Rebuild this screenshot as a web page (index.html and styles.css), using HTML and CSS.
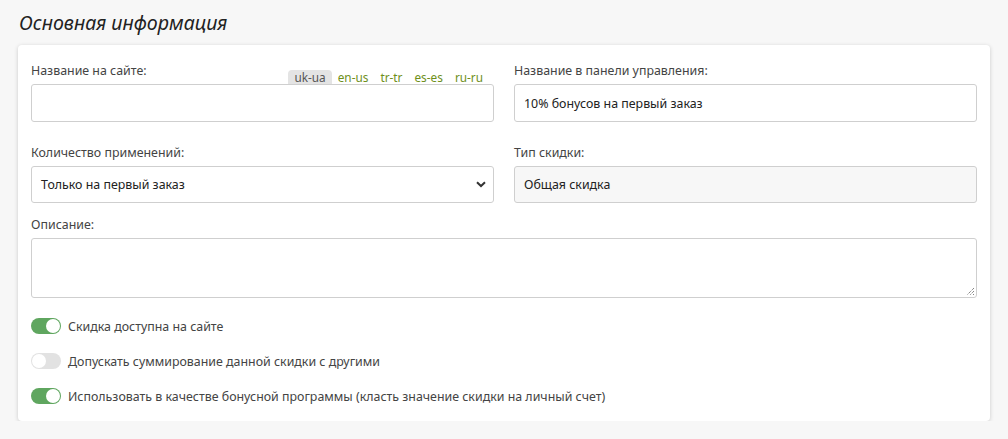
FILE: index.html
```html
<!DOCTYPE html>
<html lang="ru">
<head>
<meta charset="utf-8">
<link rel="stylesheet" href="styles.css">
</head>
<body>
<h2 class="title">Основная информация</h2>
<div class="card">
  <div class="row row-first">
    <div class="field">
      <div class="label-line">
        <label class="label">Название на сайте:</label>
        <div class="langs">
          <span class="lang active">uk-ua</span>
          <span class="lang">en-us</span>
          <span class="lang">tr-tr</span>
          <span class="lang">es-es</span>
          <span class="lang">ru-ru</span>
        </div>
      </div>
      <div class="input"></div>
    </div>
    <div class="field">
      <div class="label-line"><label class="label">Название в панели управления:</label></div>
      <div class="input">10% бонусов на первый заказ</div>
    </div>
  </div>
  <div class="row row-second">
    <div class="field">
      <div class="label-line"><label class="label">Количество применений:</label></div>
      <div class="input select">Только на первый заказ
        <svg class="chev" width="10" height="7" viewBox="0 0 10 7"><path d="M1 1.2 L5 5 L9 1.2" fill="none" stroke="#333" stroke-width="2"/></svg>
      </div>
    </div>
    <div class="field">
      <div class="label-line"><label class="label">Тип скидки:</label></div>
      <div class="input readonly">Общая скидка</div>
    </div>
  </div>
  <div class="field full">
    <div class="label-line"><label class="label">Описание:</label></div>
    <div class="textarea">
      <svg class="grip" width="9" height="9" viewBox="0 0 9 9"><path d="M8 1 L1 8 M8 4 L4 8 M8 7 L7 8" stroke="#555" stroke-width="1" stroke-dasharray="1 1"/></svg>
    </div>
  </div>
  <div class="toggles">
    <div class="toggle-row"><span class="switch on"><span class="knob"></span></span><span class="tlabel">Скидка доступна на сайте</span></div>
    <div class="toggle-row"><span class="switch"><span class="knob"></span></span><span class="tlabel">Допускать суммирование данной скидки с другими</span></div>
    <div class="toggle-row"><span class="switch on"><span class="knob"></span></span><span class="tlabel">Использовать в качестве бонусной программы (класть значение скидки на личный счет)</span></div>
  </div>
</div>
</body>
</html>
```

FILE: styles.css
```css
* { box-sizing: border-box; }
html, body { margin: 0; padding: 0; }
body {
  background: #f7f7f7;
  font-family: "Noto Sans", "Open Sans", sans-serif;
  font-size: 12.4px;
  color: #333;
  padding: 10px 18px 0 18px;
  width: 1008px;
}
.title {
  margin: 0 0 9px 1px;
  font-size: 19.6px;
  font-style: italic;
  font-weight: 400;
  line-height: 26px;
  color: #222;
}
.card {
  background: #fff;
  width: 972px;
  border-radius: 4px;
  box-shadow: 0 1px 4px rgba(0,0,0,0.18);
  padding: 17px 13px 16px 13px;
}
.row {
  display: grid;
  grid-template-columns: 1fr 1fr;
  column-gap: 20px;
}
.row-first { margin-bottom: 22px; }
.row-second { margin-bottom: 13px; }
.label-line {
  display: flex;
  justify-content: space-between;
  align-items: flex-end;
  height: 22px;
}
.label {
  color: #444;
  line-height: 18px;
  align-self: flex-start;
}
.langs {
  display: flex;
  margin-right: 5px;
  font-size: 11.8px;
  line-height: 14px;
}
.lang {
  color: #6e8f1a;
  padding: 0 6px;
  border-radius: 4px 4px 0 0;
}
.lang.active {
  background: #e4e4e4;
  color: #555;
}
.input {
  height: 38px;
  border: 1px solid #cfcfcf;
  border-radius: 3px;
  padding: 0 9px;
  display: flex;
  align-items: center;
  color: #222;
  background: #fff;
}
.row-second .input { height: 37px; }
.select {
  justify-content: space-between;
  padding-right: 7px;
}
.readonly { background: #f7f7f7; }
.textarea {
  height: 60px;
  border: 1px solid #cfcfcf;
  border-radius: 3px;
  display: flex;
  align-items: flex-end;
  justify-content: flex-end;
  padding: 0 1px 1px 0;
}
.toggles {
  display: flex;
  flex-direction: column;
  gap: 17px;
  margin-top: 19px;
}
.toggle-row {
  display: flex;
  align-items: center;
  height: 18px;
  gap: 7px;
}
.switch {
  width: 30px;
  height: 16px;
  border-radius: 8px;
  background: #e2e2e2;
  padding: 1px;
  display: flex;
  justify-content: flex-start;
}
.switch.on {
  background: #5fa65f;
  justify-content: flex-end;
}
.knob {
  width: 14px;
  height: 14px;
  border-radius: 50%;
  background: #fff;
}
.tlabel { color: #444; }
```
